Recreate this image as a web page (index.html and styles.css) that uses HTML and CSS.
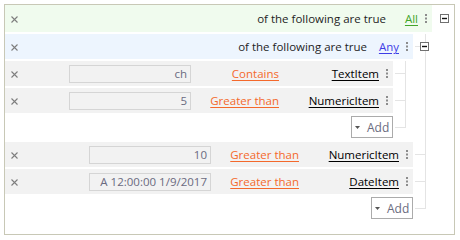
FILE: index.html
```html
<!DOCTYPE html>
<html>
<head>
<meta charset="utf-8">
<link rel="stylesheet" href="styles.css">
</head>
<body>
<div class="editor">
  <div class="node">
    <div class="cnt">
      <div class="row head all">
        <span class="del"><svg width="7" height="7" viewBox="0 0 7 7"><path d="M0.5 0.5L6.5 6.5M6.5 0.5L0.5 6.5" stroke="#7e7e7e" stroke-width="1.1"/></svg></span>
        <span class="htext">of the following are true</span>
        <span class="hlink"><span class="lnk green">All</span></span>
        <span class="menu"><svg width="2" height="9" viewBox="0 0 2 9"><rect x="0" y="0" width="2" height="2" fill="#8c8c8c"/><rect x="0" y="3.5" width="2" height="2" fill="#8c8c8c"/><rect x="0" y="7" width="2" height="2" fill="#8c8c8c"/></svg></span>
      </div>
      <div class="gbody root-body">
        <div class="node">
          <div class="cnt grp">
            <div class="row head any">
              <span class="del"><svg width="7" height="7" viewBox="0 0 7 7"><path d="M0.5 0.5L6.5 6.5M6.5 0.5L0.5 6.5" stroke="#7e7e7e" stroke-width="1.1"/></svg></span>
              <span class="htext">of the following are true</span>
              <span class="hlink"><span class="lnk blue">Any</span></span>
              <span class="menu"><svg width="2" height="9" viewBox="0 0 2 9"><rect x="0" y="0" width="2" height="2" fill="#8c8c8c"/><rect x="0" y="3.5" width="2" height="2" fill="#8c8c8c"/><rect x="0" y="7" width="2" height="2" fill="#8c8c8c"/></svg></span>
            </div>
            <div class="gbody">
              <div class="node">
                <div class="cnt">
                  <div class="row item">
                    <span class="del"><svg width="7" height="7" viewBox="0 0 7 7"><path d="M0.5 0.5L6.5 6.5M6.5 0.5L0.5 6.5" stroke="#7e7e7e" stroke-width="1.1"/></svg></span>
                    <span class="val">ch</span>
                    <span class="op"><span class="lnk orange">Contains</span></span>
                    <span class="fld"><span class="lnk black">TextItem</span></span>
                    <span class="menu"><svg width="2" height="9" viewBox="0 0 2 9"><rect x="0" y="0" width="2" height="2" fill="#8c8c8c"/><rect x="0" y="3.5" width="2" height="2" fill="#8c8c8c"/><rect x="0" y="7" width="2" height="2" fill="#8c8c8c"/></svg></span>
                  </div>
                </div>
                <div class="conn"></div>
              </div>
              <div class="node">
                <div class="cnt">
                  <div class="row item">
                    <span class="del"><svg width="7" height="7" viewBox="0 0 7 7"><path d="M0.5 0.5L6.5 6.5M6.5 0.5L0.5 6.5" stroke="#7e7e7e" stroke-width="1.1"/></svg></span>
                    <span class="val">5</span>
                    <span class="op"><span class="lnk orange">Greater than</span></span>
                    <span class="fld"><span class="lnk black">NumericItem</span></span>
                    <span class="menu"><svg width="2" height="9" viewBox="0 0 2 9"><rect x="0" y="0" width="2" height="2" fill="#8c8c8c"/><rect x="0" y="3.5" width="2" height="2" fill="#8c8c8c"/><rect x="0" y="7" width="2" height="2" fill="#8c8c8c"/></svg></span>
                  </div>
                </div>
                <div class="conn"></div>
              </div>
              <div class="node last">
                <div class="cnt">
                  <div class="addrow">
                    <span class="add"><svg class="tri" width="5" height="3" viewBox="0 0 5 3"><path d="M0 0H5L2.5 3Z" fill="#555"/></svg><span class="addtx">Add</span></span>
                  </div>
                </div>
                <div class="conn"></div>
              </div>
            </div>
          </div>
          <div class="conn gconn"><span class="toggle"><svg width="9" height="9" viewBox="0 0 9 9"><rect x="0.5" y="0.5" width="8" height="8" fill="#fff" stroke="#707070"/><path d="M2 4.5H7" stroke="#111" stroke-width="1.4"/></svg></span></div>
        </div>
        <div class="node">
          <div class="cnt">
            <div class="row item">
              <span class="del"><svg width="7" height="7" viewBox="0 0 7 7"><path d="M0.5 0.5L6.5 6.5M6.5 0.5L0.5 6.5" stroke="#7e7e7e" stroke-width="1.1"/></svg></span>
              <span class="val">10</span>
              <span class="op"><span class="lnk orange">Greater than</span></span>
              <span class="fld"><span class="lnk black">NumericItem</span></span>
              <span class="menu"><svg width="2" height="9" viewBox="0 0 2 9"><rect x="0" y="0" width="2" height="2" fill="#8c8c8c"/><rect x="0" y="3.5" width="2" height="2" fill="#8c8c8c"/><rect x="0" y="7" width="2" height="2" fill="#8c8c8c"/></svg></span>
            </div>
          </div>
          <div class="conn"></div>
        </div>
        <div class="node">
          <div class="cnt">
            <div class="row item">
              <span class="del"><svg width="7" height="7" viewBox="0 0 7 7"><path d="M0.5 0.5L6.5 6.5M6.5 0.5L0.5 6.5" stroke="#7e7e7e" stroke-width="1.1"/></svg></span>
              <span class="val">A 12:00:00 1/9/2017</span>
              <span class="op"><span class="lnk orange">Greater than</span></span>
              <span class="fld"><span class="lnk black">DateItem</span></span>
              <span class="menu"><svg width="2" height="9" viewBox="0 0 2 9"><rect x="0" y="0" width="2" height="2" fill="#8c8c8c"/><rect x="0" y="3.5" width="2" height="2" fill="#8c8c8c"/><rect x="0" y="7" width="2" height="2" fill="#8c8c8c"/></svg></span>
            </div>
          </div>
          <div class="conn"></div>
        </div>
        <div class="node last">
          <div class="cnt">
            <div class="addrow">
              <span class="add"><svg class="tri" width="5" height="3" viewBox="0 0 5 3"><path d="M0 0H5L2.5 3Z" fill="#555"/></svg><span class="addtx">Add</span></span>
            </div>
          </div>
          <div class="conn"></div>
        </div>
      </div>
    </div>
    <div class="rconn"><span class="toggle"><svg width="9" height="9" viewBox="0 0 9 9"><rect x="0.5" y="0.5" width="8" height="8" fill="#fff" stroke="#707070"/><path d="M2 4.5H7" stroke="#111" stroke-width="1.4"/></svg></span></div>
  </div>
</div>
</body>
</html>
```

FILE: styles.css
```css
body {
  margin: 0;
  font-family: "Open Sans", "Noto Sans", sans-serif;
  font-size: 11.5px;
  color: #1e1e1e;
  background: #fff;
}
.editor {
  margin: 4px;
  width: 449px;
  height: 229px;
  border: 1px solid #c8c8b6;
}
.node {
  display: flex;
}
.cnt {
  flex: 1;
  min-width: 0;
}
.grp {
  padding-bottom: 2px;
}
.gbody {
  margin-right: 7px;
}
.root-body {
  margin-right: 6px;
}
.row {
  display: flex;
  align-items: center;
  height: 25px;
  margin-bottom: 2px;
  background: #f2f2f2;
}
.head.all {
  height: 27px;
  background: #f0fbee;
}
.head.any {
  background: #edf5fe;
}
.del {
  display: flex;
  padding-left: 6px;
  margin-top: 1px;
}
.htext {
  margin-left: auto;
}
.hlink {
  width: 32px;
  text-align: right;
}
.menu {
  display: flex;
  margin: 0 5px 0 7px;
}
.lnk {
  text-decoration: underline;
  text-underline-offset: 2px;
}
.green { color: #42a52c; }
.blue { color: #3d3de6; }
.orange { color: #f4692c; }
.black { color: #000; }
.val {
  margin-left: auto;
  width: 122px;
  height: 18px;
  box-sizing: border-box;
  border: 1px solid #d5d5d5;
  background: #f2f2f2;
  color: #6a6a80;
  text-align: right;
  padding-right: 3px;
  line-height: 16px;
  white-space: nowrap;
  overflow: hidden;
}
.op {
  width: 88px;
  text-align: right;
}
.fld {
  width: 100px;
  text-align: right;
}
.conn {
  width: 13px;
  flex: none;
  background-image: linear-gradient(#e4e4e4, #e4e4e4), linear-gradient(#e4e4e4, #e4e4e4);
  background-repeat: no-repeat;
  background-size: 1px 100%, 11px 1px;
  background-position: right top, 2px 12px;
}
.last > .conn {
  background-size: 1px 13px, 11px 1px;
}
.gconn {
  background-size: 1px 100%, 5px 1px;
}
.gconn .toggle {
  margin: 8px 0 0 7px;
}
.rconn {
  width: 22px;
  flex: none;
}
.rconn .toggle {
  margin: 9px 0 0 8px;
}
.toggle {
  display: block;
  width: 9px;
  height: 9px;
}
.toggle svg {
  display: block;
}
.addrow {
  display: flex;
  justify-content: flex-end;
  margin: 1px 0 2px;
}
.add {
  display: flex;
  align-items: center;
  width: 42px;
  height: 22px;
  box-sizing: border-box;
  border: 1px solid #ababab;
  background: #fff;
  padding-left: 3px;
  color: #6b6b80;
  font-size: 12px;
}
.tri {
  display: block;
}
.addtx {
  margin-left: 7px;
}
```
